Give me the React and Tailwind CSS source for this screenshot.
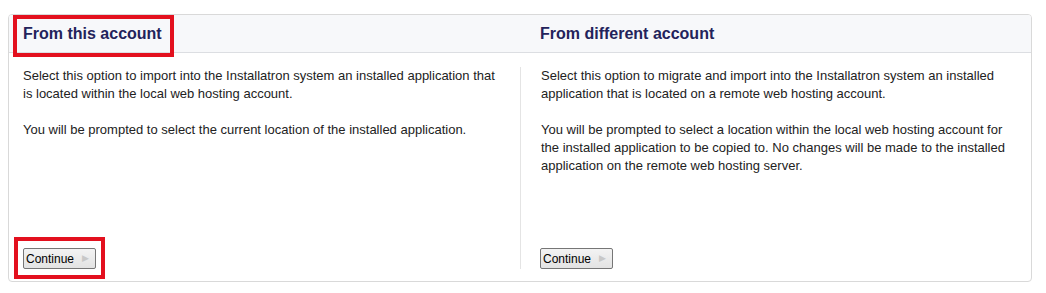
import React from "react";

function ContinueButton() {
  return (
    <button
      type="button"
      className="flex items-center h-[21px] pl-[2px] pr-[6px] border border-[#767676] rounded-[2px] bg-gradient-to-b from-[#f3f3f3] to-[#e3e3e3] text-[12px] leading-none text-black"
    >
      <span>Continue</span>
      <span className="ml-[8px] text-[9px] text-[#c8c8c8]">▶</span>
    </button>
  );
}

const COLUMNS = [
  {
    title: "From this account",
    paras: [
      "Select this option to import into the Installatron system an installed application that is located within the local web hosting account.",
      "You will be prompted to select the current location of the installed application.",
    ],
  },
  {
    title: "From different account",
    paras: [
      "Select this option to migrate and import into the Installatron system an installed application that is located on a remote web hosting account.",
      "You will be prompted to select a location within the local web hosting account for the installed application to be copied to. No changes will be made to the installed application on the remote web hosting server.",
    ],
  },
];

export default function App() {
  return (
    <div className="relative w-[1046px] h-[293px] bg-white font-['Liberation_Sans',Arial,sans-serif]">
      <div className="absolute left-0 top-0 w-full h-full pt-[14px] pl-[8px]">
        <div className="w-[1024px] h-[268px] flex flex-col border border-[#d9d9d9] rounded-[4px] overflow-hidden">
          {/* header */}
          <div className="grid grid-cols-2 h-[38px] bg-[#f7f8fa] border-b border-[#dcdee2]">
            <h2 className="flex items-center pl-[14px] text-[16px] font-bold text-[#23235b]">{COLUMNS[0].title}</h2>
            <h2 className="flex items-center pl-[20px] text-[16px] font-bold text-[#23235b]">{COLUMNS[1].title}</h2>
          </div>

          {/* body */}
          <div className="grid grid-cols-2 flex-1 pt-[14px] pb-[12px]">
            <div className="flex flex-col justify-between pl-[14px] pr-[20px]">
              <div className="text-[13px] leading-[18px] text-[#222]">
                {COLUMNS[0].paras[0]}
                <br />
                <br />
                {COLUMNS[0].paras[1]}
              </div>
              <div>
                <ContinueButton />
              </div>
            </div>
            <div className="flex flex-col justify-between pl-[19px] pr-[20px] border-l border-[#e4e4e4]">
              <div className="pl-[1px] text-[13px] leading-[18px] text-[#222]">
                {COLUMNS[1].paras[0]}
                <br />
                <br />
                {COLUMNS[1].paras[1]}
              </div>
              <div>
                <ContinueButton />
              </div>
            </div>
          </div>
        </div>
      </div>

      {/* annotation boxes */}
      <div className="absolute left-[13px] top-[15px] w-[161px] h-[42px] border-[4px] border-[#e3101e]" />
      <div className="absolute left-[14px] top-[237px] w-[91px] h-[42px] border-[4px] border-[#e3101e]" />
    </div>
  );
}
